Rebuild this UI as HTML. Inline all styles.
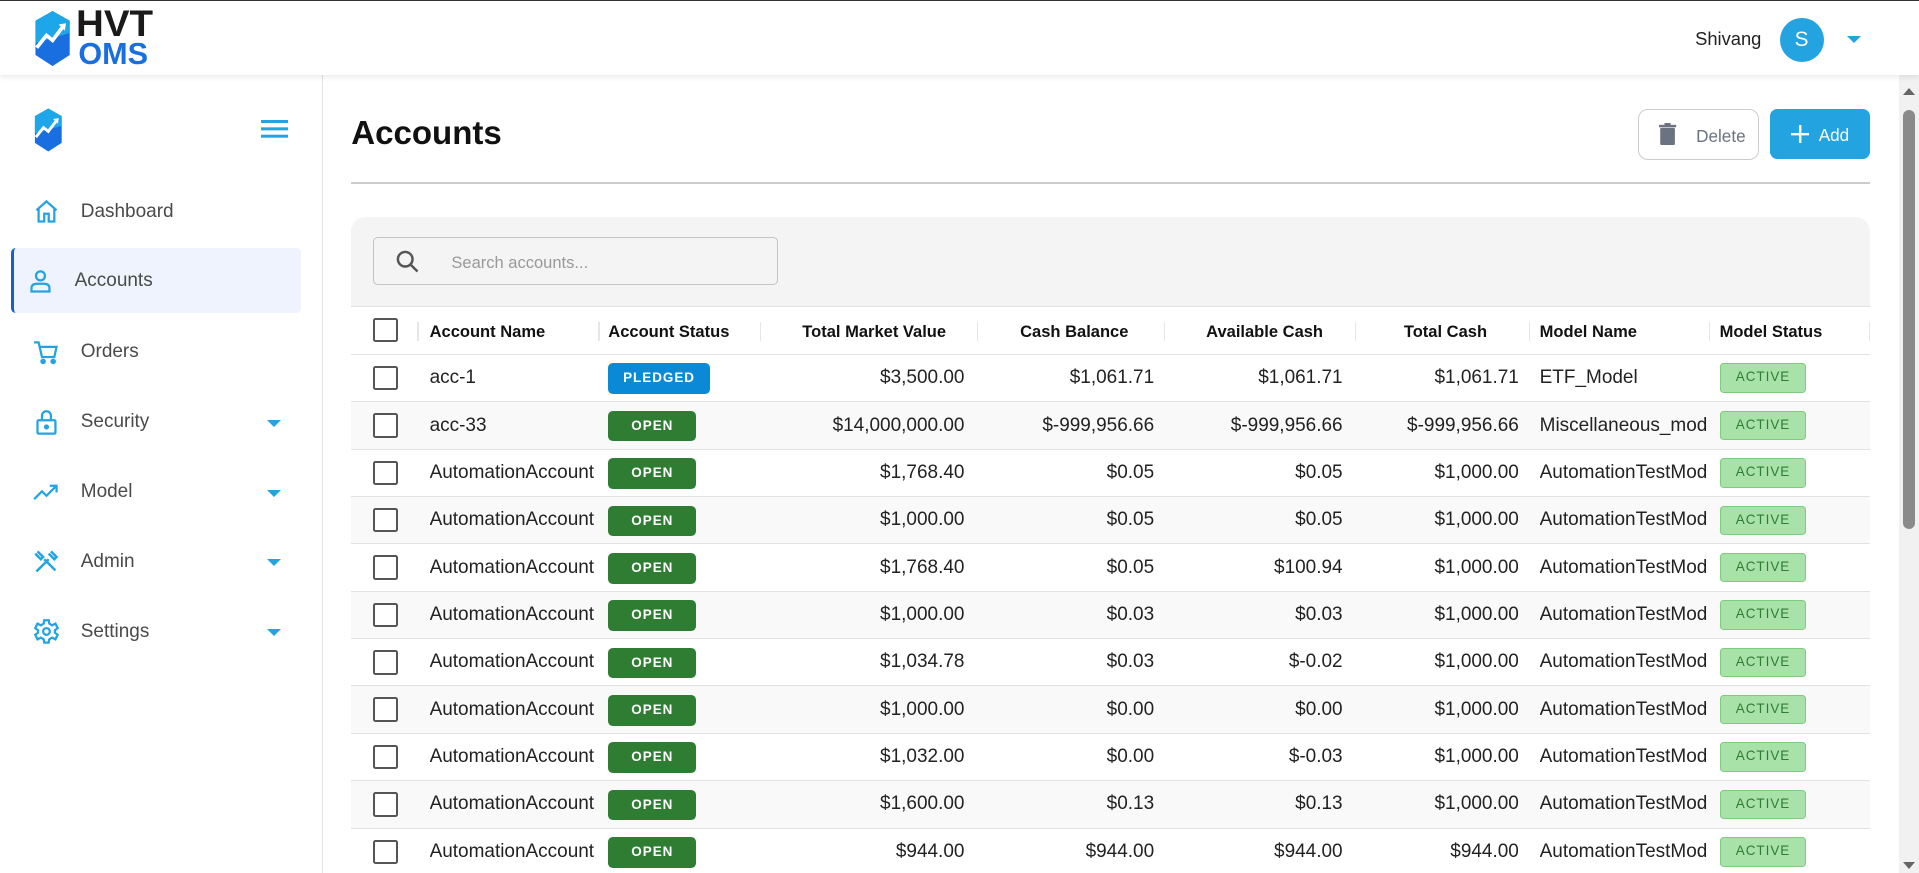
<!DOCTYPE html>
<html><head><meta charset="utf-8"><style>
*{box-sizing:border-box;margin:0;padding:0}
html,body{width:1919px;height:873px;overflow:hidden;background:#fff;font-family:"Liberation Sans",sans-serif}
#w{zoom:1.2239;width:1568px;height:713px;position:relative;overflow:hidden}
.abs{position:absolute}
.hdr{left:0;top:0;width:1568px;height:61px;background:#fff;border-top:1px solid #333;box-shadow:0 2px 4px rgba(0,0,0,.08);z-index:2}
.side{left:0;top:61px;width:264px;height:652px;border-right:1px solid #e3e3e3;background:#fff}
.nav{position:absolute;left:0;width:264px;height:40px;color:#4a4a4a;font-size:15.5px}
.nav .t{position:absolute;left:66px;top:12px}
.nav svg{position:absolute;left:27px;top:10px}
.car{position:absolute;left:218px;top:19px;width:0;height:0;border-left:6px solid transparent;border-right:6px solid transparent;border-top:6px solid #23a4e0}
.row{position:absolute;left:287px;width:1241px;height:38.7px;border-bottom:1px solid #e3e3e3;font-size:15.5px;color:#222}
.row span{position:absolute;top:10px;white-space:nowrap}
.r{text-align:right}
.cb{position:absolute;left:18px;top:9px;width:20px;height:20px;border:2px solid #555;border-radius:2px;background:#fff}
.bd{position:absolute;top:7px;height:25px;border-radius:4px;color:#fff;font-size:11px;font-weight:bold;letter-spacing:.8px;text-align:center;line-height:25px}
.ac{position:absolute;left:1118px;top:7px;width:71px;height:24px;border:1px solid #7dcb7d;background:#a9e2a9;color:#2e7d32;font-size:11px;letter-spacing:.8px;text-align:center;line-height:22px;border-radius:3px}
.th{position:absolute;top:12px;font-weight:bold;font-size:13.5px;color:#111}
.sep{position:absolute;top:12px;width:1px;height:16px;background:#e6e6e6}
</style></head><body><div id="w">
<div class="abs hdr">
 <svg class="abs" style="left:27px;top:8px" width="32" height="45" viewBox="0 0 32 45"><path d="M16 0 L30 8 V36 L16 45 L2 36 V8 Z" fill="#1a6fe0"/><path d="M16 0 L30 8 V18 L2 26 V8 Z" fill="#1ea7e8"/><path d="M3 30 L11 20 L16 24 L25 12" stroke="#fff" stroke-width="3" fill="none"/><path d="M21 11 L27 10 L26 16Z" fill="#fff"/></svg>
 <div class="abs" style="left:62px;top:5px;font-weight:bold;font-size:30px;color:#1a1a1a;line-height:28px;transform:scaleX(1.05);transform-origin:left">HVT</div>
 <div class="abs" style="left:64px;top:32px;font-weight:bold;font-size:25px;color:#1a6fe0;line-height:24px">OMS</div>
 <div class="abs" style="left:1385px;top:22px;font-size:15px;color:#222">Shivang</div>
 <div class="abs" style="left:1454px;top:14px;width:36px;height:36px;border-radius:50%;background:#23a4e0;color:#fff;font-size:17px;text-align:center;line-height:36px">S</div>
 <div class="abs" style="left:1509px;top:29px;border-left:6px solid transparent;border-right:6px solid transparent;border-top:6px solid #23a4e0"></div>
</div>
<div class="abs side">
 <svg class="abs" style="left:27px;top:27px" width="25" height="36" viewBox="0 0 32 45"><path d="M16 0 L30 8 V36 L16 45 L2 36 V8 Z" fill="#1a6fe0"/><path d="M16 0 L30 8 V18 L2 26 V8 Z" fill="#1ea7e8"/><path d="M3 30 L11 20 L16 24 L25 12" stroke="#fff" stroke-width="3" fill="none"/><path d="M21 11 L27 10 L26 16Z" fill="#fff"/></svg>
 <div class="abs" style="left:213px;top:37px;width:22px;height:2.5px;background:#23a4e0;box-shadow:0 6px 0 #23a4e0,0 12px 0 #23a4e0"></div>
 <div class="nav" style="top:91px"><svg width="22" height="22" viewBox="0 0 24 24" fill="none" stroke="#23a4e0" stroke-width="2"><path d="M3 11 L12 3 L21 11 M5 9 V21 H10 V14 H14 V21 H19 V9"/></svg><span class="t">Dashboard</span></div>
 <div class="abs" style="left:9px;top:142px;width:237px;height:53px;background:#eef3fd;border-left:2.5px solid #1a5fc8;border-radius:4px"></div>
 <div class="nav" style="top:148px"><svg style="left:22px" width="22" height="22" viewBox="0 0 24 24" fill="none" stroke="#23a4e0" stroke-width="2"><circle cx="12" cy="7" r="4"/><path d="M4 21 V18 Q4 14 9 14 H15 Q20 14 20 18 V21 Z"/></svg><span class="t" style="left:61px">Accounts</span></div>
 <div class="nav" style="top:206px"><svg width="22" height="22" viewBox="0 0 24 24" fill="none" stroke="#23a4e0" stroke-width="2"><path d="M1 3 H5 L8 16 H19 L21 7 H6"/><circle cx="9" cy="20" r="1.5" fill="#23a4e0"/><circle cx="18" cy="20" r="1.5" fill="#23a4e0"/></svg><span class="t">Orders</span></div>
 <div class="nav" style="top:263px"><svg width="22" height="22" viewBox="0 0 24 24" fill="none" stroke="#23a4e0" stroke-width="2"><rect x="4" y="10" width="16" height="12" rx="1"/><path d="M8 10 V6 a4 4 0 0 1 8 0 V10"/><circle cx="12" cy="16" r="1.3" fill="#23a4e0"/></svg><span class="t">Security</span><div class="car"></div></div>
 <div class="nav" style="top:320px"><svg width="22" height="22" viewBox="0 0 24 24" fill="none" stroke="#23a4e0" stroke-width="2"><path d="M1 18 L8 11 L12 15 L21 6 M15 6 H21 V12"/></svg><span class="t">Model</span><div class="car"></div></div>
 <div class="nav" style="top:377px"><svg width="22" height="22" viewBox="0 0 24 24" fill="none" stroke="#23a4e0" stroke-width="2.2"><path d="M3 21 L14 10 M4 3 L9 8 L7 10 L2 5 M20 20 L10 10 M16 3 L21 8 L19 10 L14 5"/></svg><span class="t">Admin</span><div class="car"></div></div>
 <div class="nav" style="top:434px"><svg width="22" height="22" viewBox="0 0 24 24" fill="none" stroke="#23a4e0" stroke-width="2"><circle cx="12" cy="12" r="3"/><path d="M10 2 H14 L14.5 5 L17 6.5 L20 5 L22 9 L19.5 11 V13 L22 15 L20 19 L17 17.5 L14.5 19 L14 22 H10 L9.5 19 L7 17.5 L4 19 L2 15 L4.5 13 V11 L2 9 L4 5 L7 6.5 L9.5 5 Z"/></svg><span class="t">Settings</span><div class="car"></div></div>
</div>
<div class="abs" style="left:287px;top:94px;font-size:27px;font-weight:bold;color:#111">Accounts</div>
<div class="abs" style="left:1338px;top:89px;width:99px;height:42px;border:1px solid #ccc;border-radius:8px;background:#fff">
 <svg class="abs" style="left:17px;top:11px" width="14" height="18" viewBox="0 0 14 18"><rect x="1" y="4" width="12" height="14" rx="1" fill="#6b7280"/><rect x="0" y="1.5" width="14" height="2" fill="#6b7280"/><rect x="4.5" y="0" width="5" height="2" fill="#6b7280"/></svg>
 <span class="abs" style="left:47px;top:13px;font-size:14px;color:#6b7280">Delete</span></div>
<div class="abs" style="left:1446px;top:89px;width:82px;height:41px;border-radius:6px;background:#23a4e0;color:#fff">
 <svg class="abs" style="left:17px;top:13px" width="15" height="15" viewBox="0 0 15 15"><path d="M7.5 0 V15 M0 7.5 H15" stroke="#fff" stroke-width="2"/></svg><span class="abs" style="left:40px;top:13px;font-size:14px">Add</span></div>
<div class="abs" style="left:287px;top:149px;width:1241px;height:1px;background:#ccc"></div>
<div class="abs" style="left:287px;top:177px;width:1241px;height:560px;background:#f4f4f4;border-radius:12px 12px 0 0"></div>
<div class="abs" style="left:305px;top:194px;width:331px;height:39px;border:1px solid #c4c4c4;border-radius:4px;background:#f4f4f4">
 <svg class="abs" style="left:16px;top:8px" width="22" height="22" viewBox="0 0 24 24" fill="none" stroke="#555" stroke-width="2.2"><circle cx="10" cy="10" r="6.5"/><path d="M15 15 L21 21"/></svg>
 <span class="abs" style="left:63px;top:12px;font-size:13.5px;color:#999">Search accounts...</span></div>
<div class="abs" style="left:287px;top:250px;width:1241px;height:40px;background:#fff;border-top:1px solid #e3e3e3;border-bottom:1px solid #e3e3e3">
 <div class="cb" style="top:9px"></div>
 <div class="sep" style="left:54px"></div><span class="th" style="left:64px">Account Name</span>
 <div class="sep" style="left:202px"></div><span class="th" style="left:210px">Account Status</span>
 <div class="sep" style="left:334px"></div><span class="th r" style="right:755px">Total Market Value</span>
 <div class="sep" style="left:511px"></div><span class="th r" style="right:606px">Cash Balance</span>
 <div class="sep" style="left:664px"></div><span class="th r" style="right:447px">Available Cash</span>
 <div class="sep" style="left:820px"></div><span class="th r" style="right:313px">Total Cash</span>
 <div class="sep" style="left:962px"></div><span class="th" style="left:971px">Model Name</span>
 <div class="sep" style="left:1109px"></div><span class="th" style="left:1118px">Model Status</span>
 <div class="sep" style="left:1240px"></div>
</div>
<div id="rows"></div>
<div class="abs" style="left:1552px;top:61px;width:16px;height:652px;background:#f1f1f1"></div>
<div class="abs" style="left:1555px;top:72px;border-left:5px solid transparent;border-right:5px solid transparent;border-bottom:6px solid #666"></div>
<div class="abs" style="left:1555px;top:90px;width:10px;height:342px;background:#8a8a8a;border-radius:5px"></div>
<div class="abs" style="left:1555px;top:704px;border-left:5px solid transparent;border-right:5px solid transparent;border-top:6px solid #666"></div>
<script>
var d=[["acc-1",1,"$3,500.00","$1,061.71","$1,061.71","$1,061.71","ETF_Model"],
["acc-33",0,"$14,000,000.00","$-999,956.66","$-999,956.66","$-999,956.66","Miscellaneous_mod"],
["AutomationAccount",0,"$1,768.40","$0.05","$0.05","$1,000.00","AutomationTestMod"],
["AutomationAccount",0,"$1,000.00","$0.05","$0.05","$1,000.00","AutomationTestMod"],
["AutomationAccount",0,"$1,768.40","$0.05","$100.94","$1,000.00","AutomationTestMod"],
["AutomationAccount",0,"$1,000.00","$0.03","$0.03","$1,000.00","AutomationTestMod"],
["AutomationAccount",0,"$1,034.78","$0.03","$-0.02","$1,000.00","AutomationTestMod"],
["AutomationAccount",0,"$1,000.00","$0.00","$0.00","$1,000.00","AutomationTestMod"],
["AutomationAccount",0,"$1,032.00","$0.00","$-0.03","$1,000.00","AutomationTestMod"],
["AutomationAccount",0,"$1,600.00","$0.13","$0.13","$1,000.00","AutomationTestMod"],
["AutomationAccount",0,"$944.00","$944.00","$944.00","$944.00","AutomationTestMod"]];
var h="";d.forEach(function(r,i){var t=290+i*38.7;
h+='<div class="row" style="top:'+t+'px;background:'+(i%2?'#f9f9f9':'#fff')+'"><div class="cb"></div><span style="left:64px;width:138px;overflow:hidden">'+r[0]+'</span>'+
(r[1]?'<div class="bd" style="left:210px;width:83px;background:#0a8ad6">PLEDGED</div>':'<div class="bd" style="left:210px;width:72px;background:#2e7d32">OPEN</div>')+
'<span style="right:740px">'+r[2]+'</span><span style="right:585px">'+r[3]+'</span><span style="right:431px">'+r[4]+'</span><span style="right:287px">'+r[5]+'</span><span style="left:971px;width:138px;overflow:hidden">'+r[6]+'</span><div class="ac">ACTIVE</div></div>';});
document.getElementById("rows").innerHTML=h;
</script>
</div></body></html>
